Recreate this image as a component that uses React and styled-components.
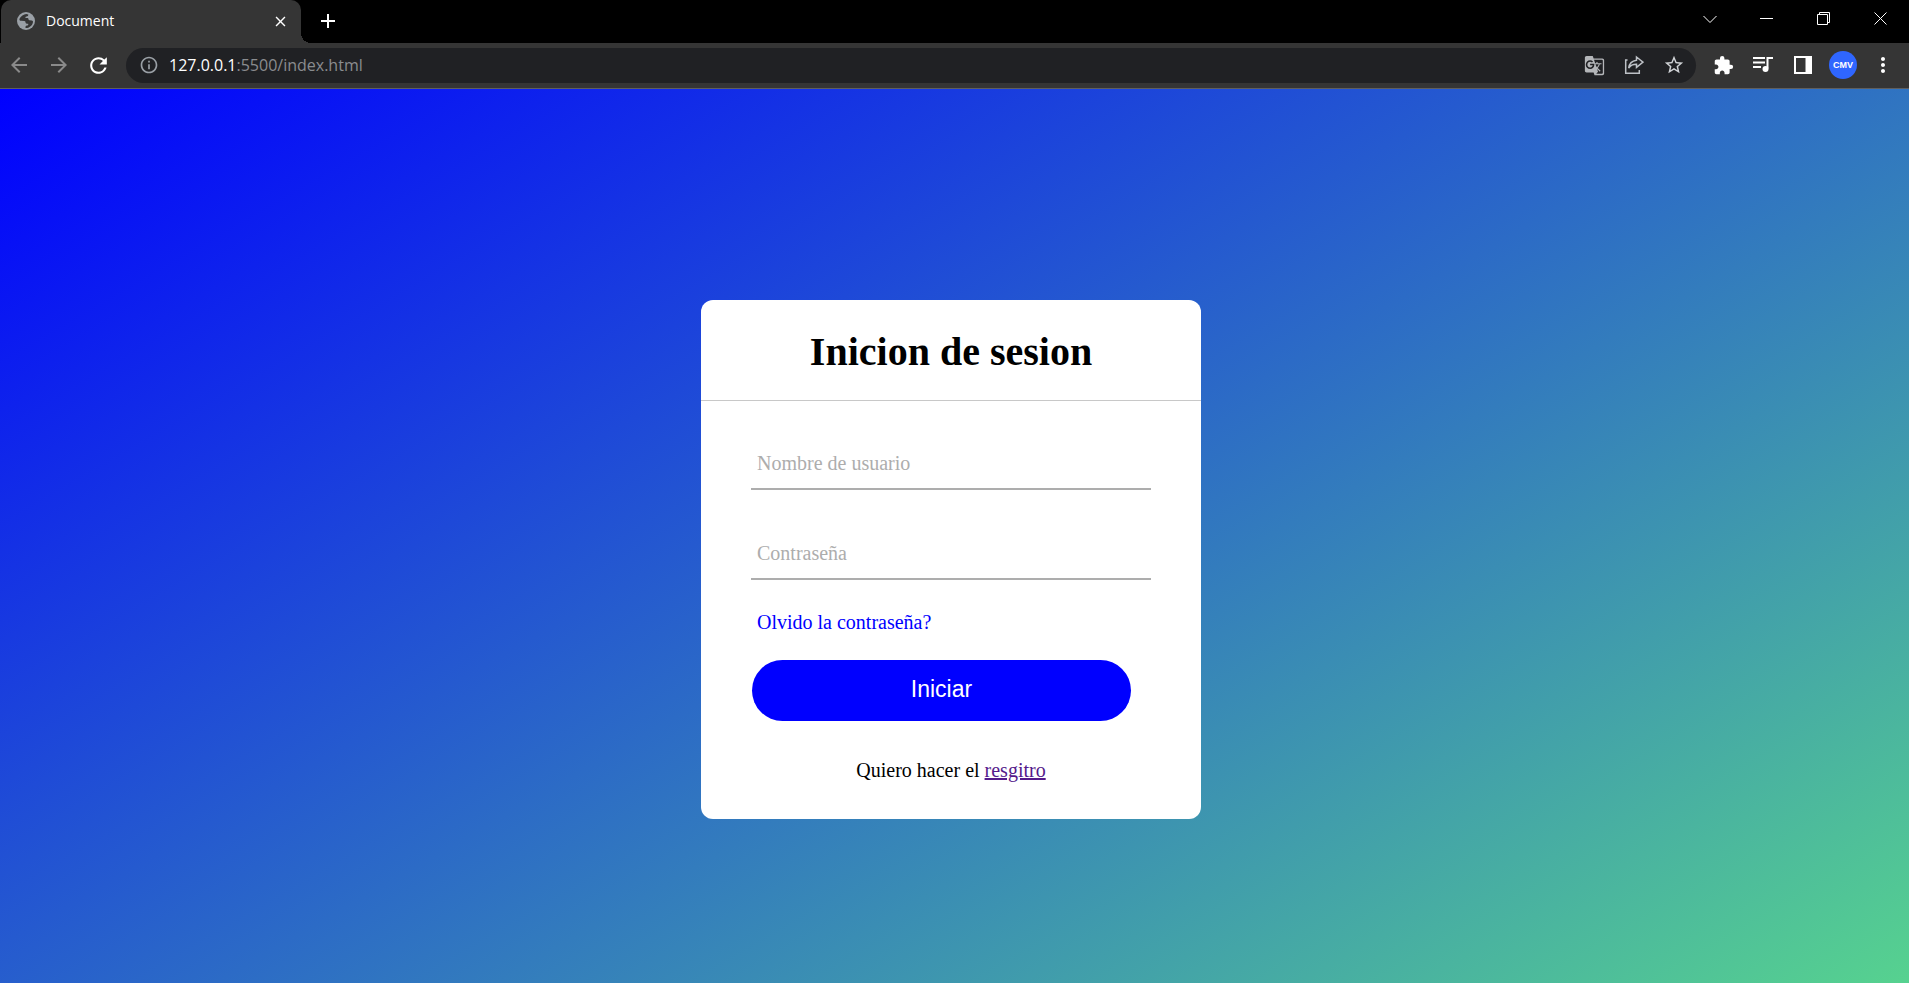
import React from "react";
import styled, { createGlobalStyle } from "styled-components";
import {
  MdArrowBack,
  MdArrowForward,
  MdClose,
  MdExtension,
  MdGTranslate,
  MdInfoOutline,
  MdMoreVert,
  MdRefresh,
  MdStarBorder,
} from "react-icons/md";

const GlobalStyle = createGlobalStyle`
  *, *::before, *::after { box-sizing: border-box; }
  body { margin: 0; }
`;

const uiFont = `"Open Sans", "Noto Sans", sans-serif`;
const pageFont = `"Liberation Serif", "Times New Roman", serif`;

const Browser = styled.div`
  display: flex;
  flex-direction: column;
  min-height: 100vh;
`;

const TabStrip = styled.header`
  display: flex;
  align-items: flex-start;
  height: 43px;
  padding-left: 1px;
  background: #000;
  color: #fff;
  font-family: ${uiFont};
`;

const Tab = styled.div`
  position: relative;
  display: flex;
  align-items: center;
  width: 300px;
  height: 43px;
  padding: 0 11px 1px 16px;
  border-radius: 10px 10px 0 0;
  background: #353535;

  &::after {
    content: "";
    position: absolute;
    left: 100%;
    bottom: 0;
    width: 10px;
    height: 10px;
    background: radial-gradient(circle at 100% 0, transparent 10px, #353535 10px);
  }
`;

const TabTitle = styled.span`
  flex: 1;
  margin-left: 11px;
  font-size: 14px;
  line-height: 20px;
`;

const IconButton = styled.button`
  display: flex;
  flex: none;
  align-items: center;
  justify-content: center;
  width: ${(p) => p.$width || 40}px;
  height: ${(p) => p.$height || 35}px;
  padding: 0;
  border: 0;
  background: transparent;
  color: ${(p) => p.$color || "#fff"};
`;

const NewTab = styled(IconButton)`
  margin-left: 11px;
`;

const WindowControls = styled.div`
  display: flex;
  margin-left: auto;
`;

const Toolbar = styled.nav`
  display: flex;
  align-items: center;
  height: 46px;
  padding: 0 6px 1px 0;
  border-bottom: 1px solid #5f5f5f;
  background: #353535;
`;

const History = styled.div`
  display: flex;
  gap: 3px;
`;

const AddressBar = styled.div`
  display: flex;
  flex: 1;
  align-items: center;
  height: 35px;
  margin: 0 7px 0 9px;
  padding: 0 2px 0 13px;
  border-radius: 18px;
  background: #202124;
  color: #9aa0a6;
`;

const Url = styled.div`
  flex: 1;
  margin-left: 10px;
  color: #8a8c8f;
  font-family: ${uiFont};
  font-size: 16px;
  line-height: 24px;
`;

const Host = styled.span`
  color: #fff;
`;

const Avatar = styled.span`
  display: flex;
  align-items: center;
  justify-content: center;
  width: 28px;
  height: 28px;
  border-radius: 50%;
  background: #2f66ff;
  font: bold 9px "Liberation Sans", Arial, sans-serif;
`;

const Page = styled.main`
  display: flex;
  flex: 1;
  align-items: center;
  justify-content: center;
  padding: 47px 7px 0 0;
  background: linear-gradient(150deg, #0000ff, #58d68d 102%);
  font-family: ${pageFont};
  font-size: 20px;
  line-height: 24px;
`;

const Card = styled.section`
  width: 500px;
  border-radius: 12px;
  background: #fff;
`;

const Title = styled.h1`
  margin: 0;
  padding: 30px 0 26px;
  border-bottom: 1px solid #c8c8c8;
  font-size: 40px;
  line-height: 44px;
  text-align: center;
`;

const Form = styled.form`
  display: flex;
  flex-direction: column;
  align-items: flex-start;
  padding: 37px 50px;
`;

const Field = styled.input`
  width: 100%;
  height: 52px;
  margin-bottom: 38px;
  padding: 0 6px;
  border: 0;
  border-bottom: 2px solid #adadad;
  border-radius: 0;
  outline: 0;
  background: transparent;
  font-family: inherit;
  font-size: 20px;

  &::placeholder {
    color: #adadad;
    opacity: 1;
  }
`;

const ForgotLink = styled.a`
  margin: -8px 0 26px 6px;
  color: #0000ff;
  text-decoration: none;
`;

const Submit = styled.button`
  width: 379px;
  height: 61px;
  margin: 0 0 37px 1px;
  padding: 0 0 2px;
  border: 0;
  border-radius: 31px;
  background: #0000ff;
  color: #fff;
  font-family: "Liberation Sans", Arial, sans-serif;
  font-size: 23px;
`;

const Register = styled.p`
  align-self: center;
  margin: 0;
`;

const RegisterLink = styled.a`
  color: #551a8b;
`;

const Line = ({ size, children, width = 1, ...rest }) => (
  <svg width={size} height={size} viewBox={`0 0 ${size} ${size}`} fill="none" stroke="currentColor" strokeWidth={width} {...rest}>
    {children}
  </svg>
);

const Globe = () => (
  <svg width="18" height="18" viewBox="0 0 18 18">
    <circle cx="9" cy="9" r="9" fill="#9aa0a6" />
    <path
      d="M9.300 1.900C6.800 2 3.700 4 2.500 6.700c-.4 1.300.3 2 1.600 2.100l3.300.1c.9.100 1.100.6 1.100 1.400 0 .9.500 1.400 1.400 1.400h1.300c.3 1.100-.2 1.700-1.300 1.800-1 .1-1.400.6-1.400 1.500v1.100c3.800.1 7-2.600 7.500-6.100.1-1-.3-1.500-1.300-1.600l-2.300-.1c-.6-.1-.8-.5-.9-1.100-.1-.8-.6-1.100-1.400-1.100H8.600c-.5-.9-.1-1.600.9-1.700 1.300-.1 1.900-.8 1.800-2z"
      fill="#353535"
    />
  </svg>
);

export default function App() {
  return (
    <>
      <GlobalStyle />
      <Browser>
        <TabStrip>
          <Tab>
            <Globe />
            <TabTitle>Document</TabTitle>
            <IconButton $width={20} $height={20} aria-label="Cerrar pestaña">
              <MdClose size={17} />
            </IconButton>
          </Tab>
          <NewTab $width={32} $height={42} aria-label="Nueva pestaña">
            <Line size={16} width={2}>
              <path d="M8 1v14M1 8h14" />
            </Line>
          </NewTab>
          <WindowControls>
            <IconButton $width={57} $height={37} aria-label="Buscar pestañas">
              <Line size={14}>
                <path d="M.5 4l6.500 6.500L13.500 4" />
              </Line>
            </IconButton>
            <IconButton $width={57} $height={37} aria-label="Minimizar">
              <Line size={13} shapeRendering="crispEdges">
                <path d="M0 6.500h13" />
              </Line>
            </IconButton>
            <IconButton $width={57} $height={37} aria-label="Restaurar">
              <Line size={13}>
                <path d="M.5 2.500h10v10H.5zM2.500 2.500V.5h10v10h-2" />
              </Line>
            </IconButton>
            <IconButton $width={57} $height={37} aria-label="Cerrar">
              <Line size={13}>
                <path d="M.5.5l12 12M12.500.5l-12 12" />
              </Line>
            </IconButton>
          </WindowControls>
        </TabStrip>

        <Toolbar>
          <History>
            <IconButton $width={37} $color="#8a8a8a" aria-label="Atrás">
              <MdArrowBack size={24} />
            </IconButton>
            <IconButton $width={37} $color="#8a8a8a" aria-label="Adelante">
              <MdArrowForward size={24} />
            </IconButton>
            <IconButton $width={37} aria-label="Recargar">
              <MdRefresh size={25} />
            </IconButton>
          </History>
          <AddressBar>
            <MdInfoOutline size={20} />
            <Url>
              <Host>127.0.0.1</Host>:5500/index.html
            </Url>
            <IconButton $color="#b4b6b9" aria-label="Traducir">
              <MdGTranslate size={21} />
            </IconButton>
            <IconButton $color="#bdc1c6" aria-label="Compartir">
              <Line size={20} width={1.5}>
                <path d="M3.500 5H1.700v13.300h13.600V15" />
                <path d="M12.500 2l6.500 5.200-6.500 5.200V9.300C8.800 9.200 6.500 10.400 4.700 13c.5-4 3-7.200 7.800-7.800z" />
              </Line>
            </IconButton>
            <IconButton $color="#d0d3d6" aria-label="Favorito">
              <MdStarBorder size={22} />
            </IconButton>
          </AddressBar>
          <IconButton aria-label="Extensiones">
            <MdExtension size={21} />
          </IconButton>
          <IconButton aria-label="Multimedia">
            <Line size={20} width={2}>
              <path d="M0 3h12M0 7.500h12M0 12h8M14.500 13.500V3H20" />
              <circle cx="12.500" cy="14" r="3" fill="currentColor" stroke="none" />
            </Line>
          </IconButton>
          <IconButton aria-label="Panel lateral">
            <Line size={18} width={2}>
              <path d="M1 1h16v16H1z" />
              <path d="M11.500 1H17v16h-5.500z" fill="currentColor" stroke="none" />
            </Line>
          </IconButton>
          <IconButton aria-label="Perfil">
            <Avatar>CMV</Avatar>
          </IconButton>
          <IconButton aria-label="Más">
            <MdMoreVert size={24} />
          </IconButton>
        </Toolbar>

        <Page>
          <Card>
            <Title>Inicion de sesion</Title>
            <Form onSubmit={(e) => e.preventDefault()}>
              <Field type="text" placeholder="Nombre de usuario" aria-label="Nombre de usuario" />
              <Field type="password" placeholder="Contraseña" aria-label="Contraseña" />
              <ForgotLink href="#recuperar">Olvido la contraseña?</ForgotLink>
              <Submit type="submit">Iniciar</Submit>
              <Register>
                Quiero hacer el <RegisterLink href="#registro">resgitro</RegisterLink>
              </Register>
            </Form>
          </Card>
        </Page>
      </Browser>
    </>
  );
}
